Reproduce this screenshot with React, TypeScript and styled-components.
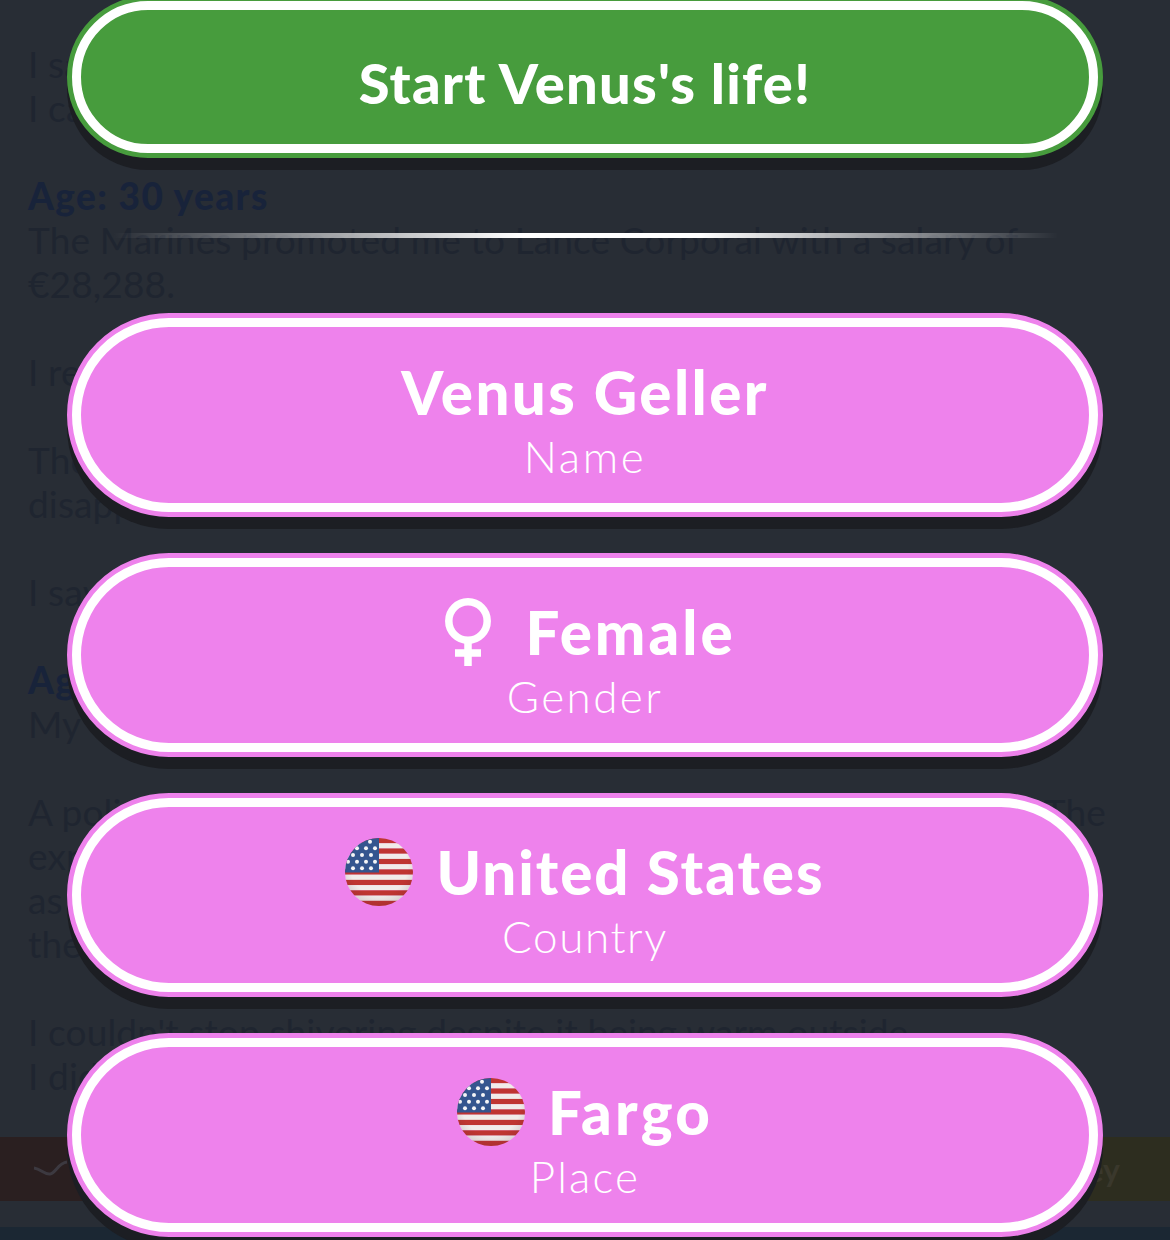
import styled, { createGlobalStyle } from "styled-components";

const GlobalStyle = createGlobalStyle`
  html, body {
    margin: 0;
    padding: 0;
    background: #282d35;
  }
`;

const FONT = `Lato, "Open Sans", sans-serif`;

const Page = styled.div`
  position: relative;
  width: 1170px;
  height: 1240px;
  overflow: hidden;
  background: #282d35;
  font-family: ${FONT};
`;

const Log = styled.div`
  display: flex;
  flex-direction: column;
  padding: 42px 64px 0 28px;
  color: #1f2530;
  font-size: 37px;
  letter-spacing: 0.14px;
  line-height: 44px;
  white-space: nowrap;
`;

const LogLine = styled.div<{ $gap?: boolean }>`
  display: flex;
  justify-content: space-between;
  height: 44px;
  margin-top: ${({ $gap }) => ($gap ? "44px" : "0")};
`;

const LogHeading = styled(LogLine)`
  color: #18233a;
  font-weight: 900;
  letter-spacing: 1.4px;
`;

const StatBar = styled.div`
  position: absolute;
  left: 0;
  right: 0;
  bottom: 39px;
  height: 64px;
  display: flex;
  align-items: center;
  justify-content: space-between;
  padding: 0 50px 0 33px;
  background: linear-gradient(90deg, #2a1f20 0%, #2a1f20 30%, #2d2d1f 70%, #2d2d1f 100%);
  color: #3a382c;
  font-size: 32px;
  font-weight: 700;
`;

const BottomBar = styled.div`
  position: absolute;
  left: 0;
  right: 0;
  bottom: 0;
  height: 13px;
  background: #1b2733;
`;

const Overlay = styled.div`
  position: absolute;
  inset: -4px 0 auto 0;
  display: flex;
  flex-direction: column;
  align-items: center;
`;

const Divider = styled.div`
  width: 945px;
  height: 5px;
  margin: 75px 0 75px;
  background: linear-gradient(
    90deg,
    rgba(255, 255, 255, 0) 0%,
    rgba(255, 255, 255, 0.55) 22%,
    #ffffff 43%,
    #ffffff 62%,
    rgba(255, 255, 255, 0.45) 85%,
    rgba(255, 255, 255, 0) 100%
  );
`;

const Stack = styled.div`
  display: flex;
  flex-direction: column;
  gap: 36px;
`;

const Pill = styled.button<{ $bg: string; $h: number }>`
  display: flex;
  flex-direction: column;
  align-items: center;
  justify-content: center;
  box-sizing: border-box;
  width: 1036px;
  height: ${({ $h }) => $h}px;
  padding: 0;
  border: 5px solid ${({ $bg }) => $bg};
  border-radius: 102px;
  background: ${({ $bg }) => $bg};
  box-shadow: 0 12px 0 #1c1e23;
  color: #fff;
  font-family: ${FONT};
  position: relative;

  &::before {
    content: "";
    position: absolute;
    inset: 0;
    border: 9px solid #fff;
    border-radius: 97px;
    pointer-events: none;
  }
`;

const StartLabel = styled.span`
  font-size: 56px;
  font-weight: 900;
  letter-spacing: 1.2px;
  line-height: 60px;
  margin-top: 12px;
`;

const TitleRow = styled.span`
  display: flex;
  align-items: center;
  gap: 23px;
  height: 68px;
  margin-top: 10px;
`;

const Title = styled.span<{ $track: number }>`
  font-size: 60px;
  font-weight: 900;
  letter-spacing: ${({ $track }) => $track}px;
  line-height: 68px;
`;

const Caption = styled.span<{ $track: number }>`
  font-size: 44px;
  font-weight: 300;
  letter-spacing: ${({ $track }) => $track}px;
  line-height: 52px;
  margin-top: 4px;
`;

const IconBox = styled.span`
  display: flex;
  align-items: center;
  justify-content: center;
  width: 68px;
  height: 68px;
`;

const FlagBall = styled.span`
  position: relative;
  display: block;
  width: 68px;
  height: 68px;
  border-radius: 50%;
  overflow: hidden;

  svg {
    display: block;
  }

  &::after {
    content: "";
    position: absolute;
    inset: 0;
    border-radius: 50%;
    background: radial-gradient(circle at 50% 42%, rgba(255, 255, 255, 0) 55%, rgba(60, 20, 50, 0.3) 100%);
  }
`;

const FemaleIcon = () => (
  <svg width="46" height="68" viewBox="0 0 46 68" fill="none" stroke="#fff" strokeWidth="7.5">
    <circle cx="23" cy="23" r="19.2" />
    <path d="M23 42V68M10 55H36" />
  </svg>
);

const UsFlag = () => {
  const stripes = Array.from({ length: 13 }, (_, i) => i);
  const stars = [
    [25, 3.7],
    [12, 10.3], [21, 10.3], [30, 10.3],
    [8, 17], [17, 17], [26, 17],
    [3, 23.7], [12, 23.7], [21, 23.7], [30, 23.7],
    [8, 30.3], [17, 30.3], [26, 30.3],
  ];
  return (
    <FlagBall>
      <svg width="68" height="68" viewBox="0 0 68 68">
        {stripes.map((i) => (
          <rect key={i} x="0" y={i * (68 / 13)} width="68" height={68 / 13 + 0.2} fill={i % 2 ? "#f1ecea" : "#bf3532"} />
        ))}
        <rect x="0" y="0" width="34" height="34.5" fill="#34558f" />
        {stars.map(([x, y]) => (
          <circle key={`${x}-${y}`} cx={x} cy={y} r="2" fill="#f4f4f6" />
        ))}
      </svg>
    </FlagBall>
  );
};

const PINK = "#ee82ec";

const rows = [
  { title: "Venus Geller", caption: "Name", height: 203.5, track: 2.4, captionTrack: 2.6 },
  { title: "Female", caption: "Gender", height: 204, track: 3, captionTrack: 2.4, icon: <FemaleIcon /> },
  { title: "United States", caption: "Country", height: 204, track: 2, captionTrack: 1.6, icon: <UsFlag /> },
  { title: "Fargo", caption: "Place", height: 204, track: 3.2, captionTrack: 2.2, icon: <UsFlag /> },
];

export default function App() {
  return (
    <Page>
      <GlobalStyle />
      <Log>
        <LogLine>I saw a doctor about my fever.</LogLine>
        <LogLine>I caught the flu from a coworker.</LogLine>
        <LogHeading $gap>Age: 30 years</LogHeading>
        <LogLine>The Marines promoted me to Lance Corporal with a salary of</LogLine>
        <LogLine>€28,288.</LogLine>
        <LogLine $gap>I read a new book.</LogLine>
        <LogLine $gap>The movie I went to see was a</LogLine>
        <LogLine>disappointment.</LogLine>
        <LogLine $gap>I saw a new film.</LogLine>
        <LogHeading $gap>Age: 31 years</LogHeading>
        <LogLine>My wife gave birth.</LogLine>
        <LogLine $gap>
          <span>A police officer stopped me on my way home.</span>
          <span>The</span>
        </LogLine>
        <LogLine>experience left me shaken</LogLine>
        <LogLine>as I walked away from</LogLine>
        <LogLine>the scene.</LogLine>
        <LogLine $gap>I couldn't stop shivering despite it being warm outside.</LogLine>
        <LogLine>I did nothing about it.</LogLine>
      </Log>
      <StatBar>
        <svg width="36" height="20" viewBox="0 0 36 20" fill="none" stroke="#3c3940" strokeWidth="3">
          <path d="M1 9C8 10 12 16 17 15C23 14 25 4 34 3" />
        </svg>
        <span>Money</span>
      </StatBar>
      <BottomBar />
      <Overlay>
        <Pill $bg="#479c3d" $h={162}>
          <StartLabel>Start Venus's life!</StartLabel>
        </Pill>
        <Divider />
        <Stack>
          {rows.map((row) => (
            <Pill key={row.caption} $bg={PINK} $h={row.height}>
              <TitleRow>
                {row.icon && <IconBox>{row.icon}</IconBox>}
                <Title $track={row.track}>{row.title}</Title>
              </TitleRow>
              <Caption $track={row.captionTrack}>{row.caption}</Caption>
            </Pill>
          ))}
        </Stack>
      </Overlay>
    </Page>
  );
}
